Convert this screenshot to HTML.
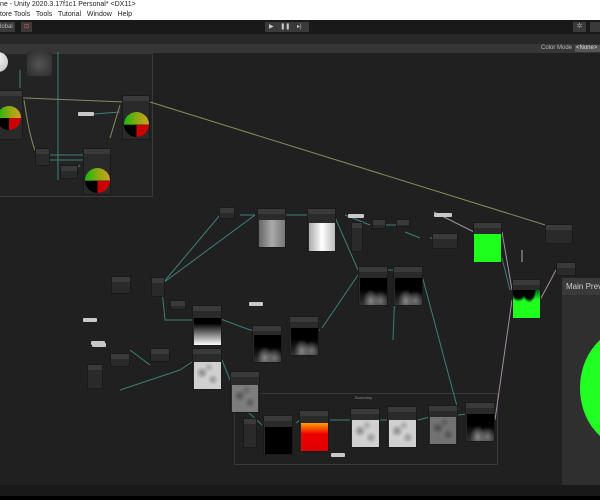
<!DOCTYPE html>
<html><head><meta charset="utf-8"><style>
*{margin:0;padding:0;box-sizing:border-box}
body{width:600px;height:500px;overflow:hidden;background:#202020;font-family:"Liberation Sans",sans-serif;position:relative}
.a{position:absolute}
.n{position:absolute;background:#2a2a2a;border:1px solid #1a1a1a}
.n:before{content:"";position:absolute;left:0;right:0;top:0;height:5px;background:#3a3a3a}
.p{position:absolute}
.noise{background:radial-gradient(circle at 30% 40%,#8a8a8a 0,transparent 25%),radial-gradient(circle at 70% 65%,#999 0,transparent 22%),radial-gradient(circle at 55% 20%,#aaa 0,transparent 20%),#d0d0d0}
.dark{background:radial-gradient(ellipse at 40% 85%,#888 0,transparent 35%),radial-gradient(ellipse at 75% 85%,#777 0,transparent 30%),linear-gradient(#000 40%,#333)}
.sph{position:absolute;border-radius:50%;background:linear-gradient(to bottom,rgba(0,0,0,0) 40%,rgba(0,0,0,.0) 50%),linear-gradient(to right,#000 0,#000 48%,#cc0000 52%) bottom/100% 50% no-repeat,linear-gradient(to right,#11bb11,#88aa11 50%,#d4a020) top/100% 50% no-repeat}
.lbl{position:absolute;height:4px;background:#c8c8c8;border-radius:1px}
</style></head><body>
<div class="a" style="left:0;top:0;width:600px;height:20px;background:#fff"></div>
<div class="a" style="left:0;top:1px;font-size:7px;color:#222">ne - Unity 2020.3.17f1c1 Personal* &lt;DX11&gt;</div>
<div class="a" style="left:0;top:11px;font-size:7px;color:#222">tore Tools&nbsp;&nbsp; Tools&nbsp;&nbsp; Tutorial&nbsp;&nbsp; Window&nbsp;&nbsp; Help</div>
<div class="a" style="left:0;top:20px;width:600px;height:14px;background:#191919"></div>
<div class="a" style="left:0;top:22px;width:15px;height:10px;background:#3a3a3a;font-size:6px;color:#bbb;line-height:10px">lobal</div>
<div class="a" style="left:21px;top:22px;width:11px;height:10px;background:#3a3a3a;font-size:6px;color:#e55;text-align:center;line-height:10px">⊡</div>
<div class="a" style="left:265px;top:22px;width:44px;height:10px;background:#3a3a3a;color:#ccc;font-size:6px;line-height:10px;word-spacing:5px;padding-left:4px">▶ ❚❚ ▸|</div>
<div class="a" style="left:573px;top:22px;width:13px;height:10px;background:#3a3a3a;color:#999;font-size:7px;text-align:center;line-height:10px">✲</div>
<div class="a" style="left:590px;top:22px;width:10px;height:10px;background:#3a3a3a"></div>
<div class="a" style="left:0;top:34px;width:600px;height:10px;background:#282828"></div>
<div class="a" style="left:0;top:44px;width:600px;height:9px;background:#363636"></div>
<div class="a" style="left:541px;top:45px;font-size:6px;color:#bbb">Color Mode</div>
<div class="a" style="left:575px;top:45px;width:25px;height:7px;background:#555;font-size:6px;color:#ddd;line-height:7px;padding-left:1px">&lt;None&gt;</div>
<div class="a" style="left:0;top:485px;width:600px;height:11px;background:#191919"></div>
<div class="a" style="left:0;top:496px;width:600px;height:4px;background:#000"></div>

<div class="a" style="left:-2px;top:53px;width:155px;height:144px;border:1px solid #393939;background:#232323"></div>
<div class="a" style="left:234px;top:393px;width:264px;height:72px;border:1px solid #393939"></div>
<div class="a" style="left:355px;top:395px;font-size:4px;color:#888">Boundary</div>

<svg class="a" style="left:0;top:0" width="600" height="500">
<g fill="none" stroke-width="1">
<path d="M0 97 L125 102 M150 102 L555 228" stroke="#8a8a60"/>
<path d="M24 100 Q30 140 36 152 M110 138 L120 105" stroke="#8a8a60"/>
<path d="M20 70 L20 88 M58 52 L58 180 M48 155 L85 155 M48 160 L85 160 M80 165 L70 175 M80 115 L120 112" stroke="#3f7f7a"/>
<g stroke="#3f7f7a">
<path d="M163 283 L220 215 M163 283 L255 215 M240 215 L255 215 M285 215 L308 215 M334 215 L358 270 M162 290 L165 320 L192 320 M210 315 L250 330 L255 330 M322 328 L358 275 M388 270 L395 270 M420 268 L458 410 M395 290 L393 340 M320 330 L292 330 M180 370 L192 362 M120 390 L180 370 M222 360 L232 385 M248 412 L262 425 M296 423 L300 420 M330 420 L352 420 M380 420 L389 420 M418 420 L430 417 M458 415 L467 414 M345 215 L370 225 M380 225 L400 225 M430 238 L458 238 M405 232 L420 238 M495 230 L510 290 M130 350 L150 365"/>
</g>
<path d="M495 420 L512 300 M540 300 L556 270 M502 232 L512 290 M434 212 L474 232" stroke="#a090a0"/>
<path d="M522 250 L522 262" stroke="#aaa"/>
</g>
</svg>

<div class="a" style="left:-12px;top:52px;width:20px;height:20px;border-radius:50%;background:radial-gradient(circle at 30% 30%,#fff,#bbb)"></div>
<div class="a" style="left:27px;top:52px;width:25px;height:24px;background:radial-gradient(circle,#555,#2a2a2a)"></div>
<div class="n" style="left:-5px;top:90px;width:28px;height:50px"></div>
<div class="sph" style="left:-3px;top:106px;width:24px;height:24px"></div>
<div class="n" style="left:122px;top:95px;width:28px;height:45px"></div>
<div class="sph" style="left:124px;top:112px;width:25px;height:25px"></div>
<div class="n" style="left:83px;top:148px;width:28px;height:47px"></div>
<div class="sph" style="left:85px;top:168px;width:25px;height:25px"></div>
<div class="n" style="left:35px;top:148px;width:15px;height:18px"></div>
<div class="n" style="left:60px;top:165px;width:18px;height:14px"></div>
<div class="lbl" style="left:78px;top:112px;width:16px"></div>

<div class="n" style="left:219px;top:207px;width:16px;height:12px"></div>
<div class="n" style="left:257px;top:208px;width:29px;height:40px"></div>
<div class="p" style="left:259px;top:220px;width:26px;height:27px;background:linear-gradient(90deg,#666,#aaa 50%,#777)"></div>
<div class="n" style="left:307px;top:208px;width:29px;height:44px"></div>
<div class="p" style="left:309px;top:223px;width:26px;height:28px;background:linear-gradient(90deg,#aaa,#fff 50%,#bbb)"></div>
<div class="n" style="left:351px;top:222px;width:12px;height:30px"></div>
<div class="n" style="left:372px;top:219px;width:14px;height:10px"></div>
<div class="n" style="left:396px;top:219px;width:14px;height:8px"></div>
<div class="n" style="left:432px;top:233px;width:26px;height:16px"></div>
<div class="lbl" style="left:348px;top:214px;width:16px"></div>
<div class="lbl" style="left:434px;top:213px;width:18px"></div>
<div class="n" style="left:473px;top:222px;width:29px;height:41px"></div>
<div class="p" style="left:474px;top:234px;width:27px;height:28px;background:#1eff1e"></div>
<div class="n" style="left:545px;top:224px;width:28px;height:20px"></div>
<div class="n" style="left:556px;top:262px;width:20px;height:14px"></div>
<div class="n" style="left:512px;top:279px;width:29px;height:40px"></div>
<div class="p" style="left:513px;top:290px;width:27px;height:28px;background:radial-gradient(ellipse at 20% 0,#000 0 20%,transparent 30%),radial-gradient(ellipse at 60% 0,#000 0 22%,transparent 32%),linear-gradient(#062 0,#1eff1e 35%)"></div>

<div class="n" style="left:111px;top:276px;width:20px;height:18px"></div>
<div class="n" style="left:151px;top:277px;width:14px;height:20px"></div>
<div class="n" style="left:170px;top:300px;width:16px;height:10px"></div>
<div class="n" style="left:358px;top:266px;width:30px;height:40px"></div>
<div class="p dark" style="left:360px;top:278px;width:27px;height:27px"></div>
<div class="n" style="left:393px;top:266px;width:30px;height:40px"></div>
<div class="p dark" style="left:395px;top:278px;width:27px;height:27px"></div>
<div class="n" style="left:192px;top:305px;width:30px;height:41px"></div>
<div class="p" style="left:194px;top:318px;width:27px;height:27px;background:linear-gradient(#000 20%,#fff)"></div>
<div class="n" style="left:252px;top:325px;width:30px;height:38px"></div>
<div class="p dark" style="left:254px;top:335px;width:27px;height:27px"></div>
<div class="n" style="left:289px;top:316px;width:30px;height:40px"></div>
<div class="p dark" style="left:291px;top:328px;width:27px;height:27px"></div>
<div class="lbl" style="left:249px;top:302px;width:14px"></div>
<div class="lbl" style="left:92px;top:343px;width:14px"></div>
<div class="lbl" style="left:83px;top:318px;width:14px"></div>

<div class="n" style="left:110px;top:353px;width:20px;height:14px"></div>
<div class="n" style="left:87px;top:364px;width:16px;height:25px"></div>
<div class="n" style="left:150px;top:348px;width:20px;height:14px"></div>
<div class="lbl" style="left:91px;top:341px;width:14px"></div>
<div class="n" style="left:192px;top:348px;width:30px;height:42px"></div>
<div class="p noise" style="left:194px;top:362px;width:27px;height:27px"></div>
<div class="n" style="left:230px;top:371px;width:30px;height:42px"></div>
<div class="p noise" style="left:232px;top:385px;width:26px;height:27px;filter:brightness(.6)"></div>

<div class="n" style="left:243px;top:418px;width:14px;height:30px"></div>
<div class="n" style="left:263px;top:415px;width:30px;height:40px"></div>
<div class="p" style="left:265px;top:427px;width:27px;height:27px;background:#000"></div>
<div class="n" style="left:299px;top:410px;width:30px;height:42px"></div>
<div class="p" style="left:301px;top:423px;width:27px;height:28px;background:linear-gradient(#ffa000,#e00 40%,#d00)"></div>
<div class="n" style="left:350px;top:408px;width:30px;height:40px"></div>
<div class="p noise" style="left:352px;top:420px;width:27px;height:27px"></div>
<div class="n" style="left:387px;top:406px;width:30px;height:42px"></div>
<div class="p noise" style="left:389px;top:420px;width:27px;height:27px"></div>
<div class="n" style="left:428px;top:405px;width:30px;height:40px"></div>
<div class="p noise" style="left:430px;top:417px;width:26px;height:27px;filter:brightness(.55)"></div>
<div class="n" style="left:465px;top:402px;width:30px;height:40px"></div>
<div class="p dark" style="left:467px;top:414px;width:27px;height:27px"></div>
<div class="lbl" style="left:331px;top:453px;width:14px"></div>

<div class="a" style="left:562px;top:278px;width:38px;height:207px;background:#2f2f2f;overflow:hidden">
<div style="height:17px;background:#3a3a3a;color:#ccc;font-size:8px;line-height:17px;padding-left:4px;white-space:nowrap">Main Preview</div>
<div style="position:absolute;left:18px;top:50px;width:100px;height:120px;border-radius:50%;background:#22ff22"></div>
</div>
</body></html>
